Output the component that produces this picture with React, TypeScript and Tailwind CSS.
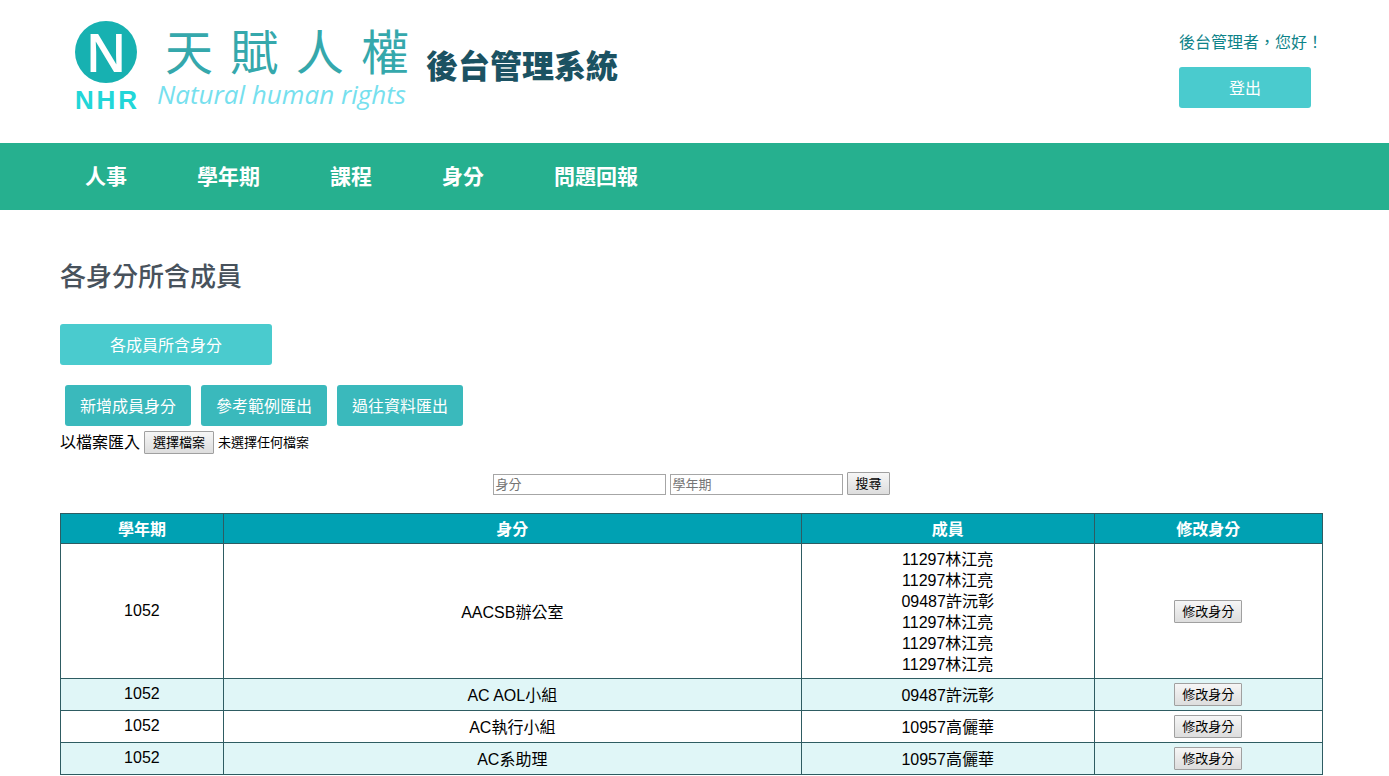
import React from 'react';

interface RoleRow {
    term: string;
    role: string;
    members: string[];
}

const navItems = ['人事', '學年期', '課程', '身分', '問題回報'];

const columns = ['學年期', '身分', '成員', '修改身分'];

const rows: RoleRow[] = [
    {
        term: '1052',
        role: 'AACSB辦公室',
        members: ['11297林江亮', '11297林江亮', '09487許沅彰', '11297林江亮', '11297林江亮', '11297林江亮'],
    },
    { term: '1052', role: 'AC AOL小組', members: ['09487許沅彰'] },
    { term: '1052', role: 'AC執行小組', members: ['10957高儷華'] },
    { term: '1052', role: 'AC系助理', members: ['10957高儷華'] },
];

const grayButton =
    'h-[23px] pt-[1px] text-[13px] leading-[20px] border border-[#a0a0a0] rounded-[1px] bg-linear-to-b from-[#f6f6f6] to-[#dddddd] text-black whitespace-nowrap';

const flatButton = 'h-[41px] rounded-[3px] pt-[2px] text-[16px] text-white';

const Logo: React.FC = () => (
    <a href="#" className="flex items-start pl-[15px] pt-[21px]">
        <div className="w-[62px]">
            <div className="flex h-[62px] items-center justify-center rounded-full bg-[#17b1b1] font-['Open_Sans'] text-[52px] leading-[52px] font-semibold text-white">N</div>
            <div className="mt-[7px] flex justify-between text-[26px] leading-[20px] font-bold text-[#22d6d8]">
                <span>N</span>
                <span>H</span>
                <span>R</span>
            </div>
        </div>
        <div className="ml-[20px] w-[256px]">
            <div className="mt-[8px] mr-[4px] ml-[8px] flex justify-between text-[48px] leading-[50px] font-normal text-[#35a8ac]">
                <span>天</span>
                <span>賦</span>
                <span>人</span>
                <span>權</span>
            </div>
            <div className="mt-[2px] font-['Open_Sans'] text-[26px] leading-[26px] font-medium italic whitespace-nowrap text-[#76e0ee]">Natural human rights</div>
        </div>
        <div className="mt-[30px] ml-[13px] text-[32px] leading-[33px] font-black whitespace-nowrap text-[#1b5262]">後台管理系統</div>
    </a>
);

const Header: React.FC = () => (
    <header className="flex h-[143px] justify-between pr-[66px] pl-[60px]">
        <Logo />
        <div className="w-[144px] pt-[31px] text-[16px] leading-[24px]">
            <p className="whitespace-nowrap text-[#0e8389]">後台管理者，您好！</p>
            <button type="button" className={`${flatButton} mt-[12px] bg-[#4acbce] px-[50px]`}>登出</button>
        </div>
    </header>
);

const RoleTable: React.FC = () => (
    <table className="mt-[18px] w-full table-fixed border-collapse text-center text-[16px] leading-[21px] text-black">
        <colgroup>
            <col className="w-[12.9%]" />
            <col className="w-[45.8%]" />
            <col className="w-[23.2%]" />
            <col className="w-[18.1%]" />
        </colgroup>
        <thead>
            <tr className="bg-[#00a1b3] text-white">
                {columns.map((name) => (
                    <th key={name} className="border border-[#2e5c62] pt-[5px] pb-[3px] font-bold">{name}</th>
                ))}
            </tr>
        </thead>
        <tbody>
            {rows.map((row) => (
                <tr key={row.role} className="even:bg-[#e0f6f7]">
                    <td className="border border-[#2e5c62] pt-[3px] pb-[5px]">{row.term}</td>
                    <td className="border border-[#2e5c62] pt-[5px] pb-[3px]">{row.role}</td>
                    <td className="border border-[#2e5c62] pt-[5px] pb-[3px]">
                        {row.members.map((member, i) => (
                            <div key={i}>{member}</div>
                        ))}
                    </td>
                    <td className="border border-[#2e5c62] py-[4px]">
                        <button type="button" className={`${grayButton} mx-auto block px-[7px]`}>修改身分</button>
                    </td>
                </tr>
            ))}
        </tbody>
    </table>
);

export default function App() {
    return (
        <div lang="zh-Hant" className="bg-white font-['Liberation_Sans','Noto_Sans_CJK_TC',sans-serif]">
            <Header />
            <nav className="flex h-[67px] items-center gap-[70px] bg-[#26b08f] pl-[85px] text-[21px] font-bold text-white">
                {navItems.map((item) => (
                    <a key={item} href="#">{item}</a>
                ))}
            </nav>

            <main className="pt-[49px] pr-[66px] pl-[60px]">
                <h1 className="text-[26px] leading-[36px] font-medium text-[#48525c]">各身分所含成員</h1>

                <button type="button" className={`${flatButton} mt-[29px] block bg-[#4acbce] px-[50px]`}>各成員所含身分</button>

                <div className="mt-[20px] flex gap-[10px] px-[5px]">
                    <button type="button" className={`${flatButton} bg-[#3ab9bc] px-[15px]`}>新增成員身分</button>
                    <button type="button" className={`${flatButton} bg-[#3ab9bc] px-[15px]`}>參考範例匯出</button>
                    <button type="button" className={`${flatButton} bg-[#3ab9bc] px-[15px]`}>過往資料匯出</button>
                </div>

                <div className="mt-[5px] flex h-[23px] items-center gap-[4px] text-black">
                    <span className="text-[16px]">以檔案匯入</span>
                    <label htmlFor="import-file" className={`${grayButton} block px-[8px]`}>選擇檔案</label>
                    <input id="import-file" type="file" className="sr-only" />
                    <span className="text-[13px]">未選擇任何檔案</span>
                </div>

                <form className="mt-[18px] flex items-end justify-center gap-[4px] text-[13px]">
                    <input type="text" aria-label="身分" placeholder="身分" className="h-[21px] w-[173px] border border-[#a6a6a6] px-[1px] placeholder:text-[#757575]" />
                    <input type="text" aria-label="學年期" placeholder="學年期" className="h-[21px] w-[173px] border border-[#a6a6a6] px-[1px] placeholder:text-[#757575]" />
                    <button type="button" className={`${grayButton} px-[7px]`}>搜尋</button>
                </form>

                <RoleTable />
            </main>
        </div>
    );
}
